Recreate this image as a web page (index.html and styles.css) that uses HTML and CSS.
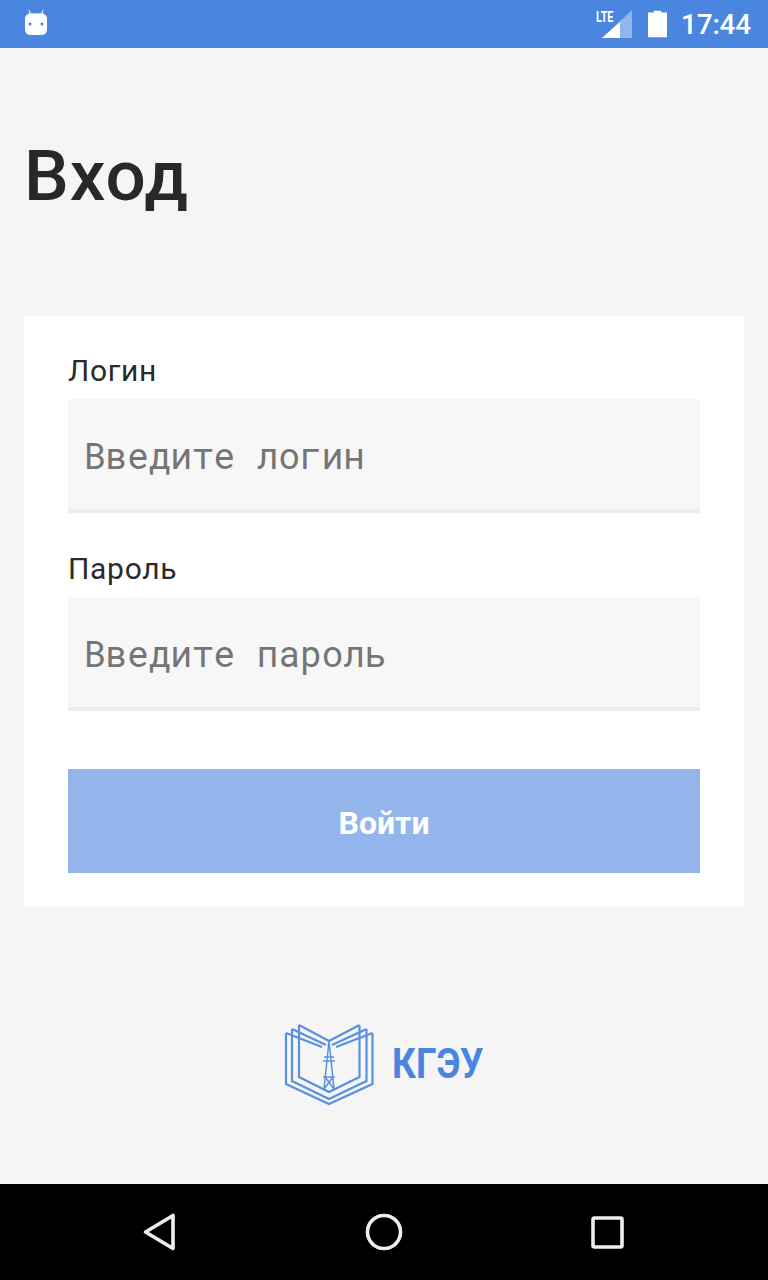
FILE: index.html
```html
<!DOCTYPE html>
<html lang="ru">
<head>
<meta charset="utf-8">
<title>Вход</title>
<link rel="stylesheet" href="styles.css">
</head>
<body>
<div class="screen">
  <header class="status-bar">
    <svg class="status-bot" viewBox="0 0 24 28" width="24" height="28">
      <path class="white-soft" d="M4.500 0.500 L6 5.500 H18 L19.500 0.500 L19 6 L20 8 H4 L5 6 Z"/>
      <path class="white-fill" d="M6 5.500 H18 Q23 6 23 11 V21 Q23 27 17 27 H7 Q1 27 1 21 V11 Q1 6 6 5.500 Z"/>
      <path class="white-fill" d="M4.500 0.500 L7 6 H5.500 Z M19.500 0.500 L17 6 H18.500 Z"/>
      <circle class="bot-eye" cx="6" cy="16" r="1.500"/>
      <circle class="bot-eye" cx="18" cy="16" r="1.500"/>
    </svg>
    <div class="status-right">
      <span class="lte">LTE</span>
      <svg class="signal" viewBox="0 0 32 30" width="32" height="30">
        <path class="white-soft" d="M31 1 V29 H1 Z"/>
        <path class="white-fill" d="M19 13 V29 H1 Z"/>
      </svg>
      <svg class="battery" viewBox="0 0 20 28" width="19" height="28">
        <path class="white-fill" d="M6 0 H14 V2 H20 V28 H0 V2 H6 Z"/>
      </svg>
      <span class="clock">17:44</span>
    </div>
  </header>

  <main class="content">
    <h1 class="title">Вход</h1>
    <form class="card">
      <div class="field">
        <div class="label">Логин</div>
        <div class="input">Введите логин</div>
      </div>
      <div class="field">
        <div class="label">Пароль</div>
        <div class="input">Введите пароль</div>
      </div>
      <div class="button">Войти</div>
    </form>
    <div class="logo">
      <svg class="logo-mark" viewBox="0 0 100 90" width="100" height="90">
        <g class="logo-lines">
          <path d="M6 14 V65 L49 85 L92.500 65 V14"/>
          <path d="M12 10 V62 L49 80 L86.500 62 V10"/>
          <path d="M19 6 V58 L49 73 L79.500 58 V6"/>
          <path d="M6 14 L42 28 M92.500 14 L56 28"/>
          <path d="M12 10 L46 26 M86.500 10 L52 26"/>
          <path d="M19 6 L49 22 L79.500 6"/>
          <path class="thin" d="M49 22 L44 70 M49 22 L54 70 M44 38 H54 M43 42 H55 M43 58 H55 M45 58 L54 70 M53 58 L44 70"/>
        </g>
      </svg>
      <span class="logo-text">КГЭУ</span>
    </div>
  </main>

  <nav class="nav-bar">
    <svg viewBox="0 0 34 38" width="34" height="38"><path class="nav-stroke" d="M30 2.500 V35.500 L2.500 19 Z"/></svg>
    <svg viewBox="0 0 38 38" width="38" height="38"><circle class="nav-stroke" cx="19" cy="19" r="16.500"/></svg>
    <svg viewBox="0 0 33 33" width="33" height="33"><rect class="nav-stroke" x="2" y="2" width="29" height="29" rx="1.500"/></svg>
  </nav>
</div>
</body>
</html>
```

FILE: styles.css
```css
* { box-sizing: border-box; }
html, body { margin: 0; padding: 0; }
body { font-family: Roboto, "Noto Sans", sans-serif; }

.screen {
  width: 768px;
  height: 1280px;
  display: flex;
  flex-direction: column;
  background: #f5f5f5;
  overflow: hidden;
}

.status-bar {
  height: 48px;
  flex: none;
  background: #4a86e0;
  display: flex;
  align-items: center;
  justify-content: space-between;
  padding: 0 17px 0 24px;
  color: #fff;
}
.status-bot { margin-top: -4px; }
.status-right { display: flex; align-items: center; }
.lte {
  font-size: 15px;
  font-weight: 700;
  align-self: flex-start;
  margin: 0 -19px 0 0;
  transform: scaleX(0.72);
  transform-origin: left;
  width: 24px;
}
.signal { margin-right: 15px; }
.battery { margin-right: 14px; }
.clock { font-size: 28px; font-weight: 500; letter-spacing: -0.2px; }
.white-fill { fill: #fff; }
.white-soft { fill: #fff; fill-opacity: 0.4; }
.bot-eye { fill: #4a86e0; }

.content {
  flex: 1;
  display: flex;
  flex-direction: column;
  padding: 0 24px;
}
.title {
  margin: 84px 0 0;
  font-size: 71px;
  line-height: 88px;
  font-weight: 500;
  letter-spacing: 1px;
  color: #282828;
}
.card {
  margin-top: 96px;
  background: #fff;
  padding: 34px 44px;
  height: 591px;
  display: flex;
  flex-direction: column;
}
.field { display: flex; flex-direction: column; }
.field + .field { margin-top: 35px; }
.label {
  height: 49px;
  font-size: 30px;
  line-height: 42px;
  letter-spacing: 0.7px;
  color: #2a2a2a;
}
.input {
  height: 114px;
  padding: 2px 16px 0;
  background: #f7f7f7;
  border-bottom: 4px solid #e8eef5;
  display: flex;
  align-items: center;
  font-family: "Roboto Mono", Roboto, sans-serif;
  font-size: 36px;
  color: #757575;
}
.button {
  margin-top: 58px;
  height: 104px;
  padding-top: 3px;
  background: #93b5ec;
  display: flex;
  align-items: center;
  justify-content: center;
  color: #fff;
  font-size: 32px;
  font-weight: 700;
}

.logo {
  margin-top: 112px;
  display: flex;
  align-items: center;
  justify-content: center;
  gap: 12px;
  padding-right: 6px;
}
.logo-lines path { fill: none; stroke: #5a90e2; stroke-width: 2.2; }
.logo-lines .thin { stroke-width: 1.5; }
.logo-text {
  font-size: 42px;
  font-weight: 700;
  color: #4a86e0;
  transform: scaleX(0.88);
  transform-origin: left;
  width: 90px;
  margin-top: -2px;
  white-space: nowrap;
}

.nav-bar {
  height: 96px;
  flex: none;
  background: #000;
  display: flex;
  align-items: center;
  justify-content: space-between;
  padding: 0 144px 0 143px;
}
.nav-stroke {
  fill: none;
  stroke: #eee;
  stroke-width: 3.6;
  stroke-linejoin: round;
}
```
